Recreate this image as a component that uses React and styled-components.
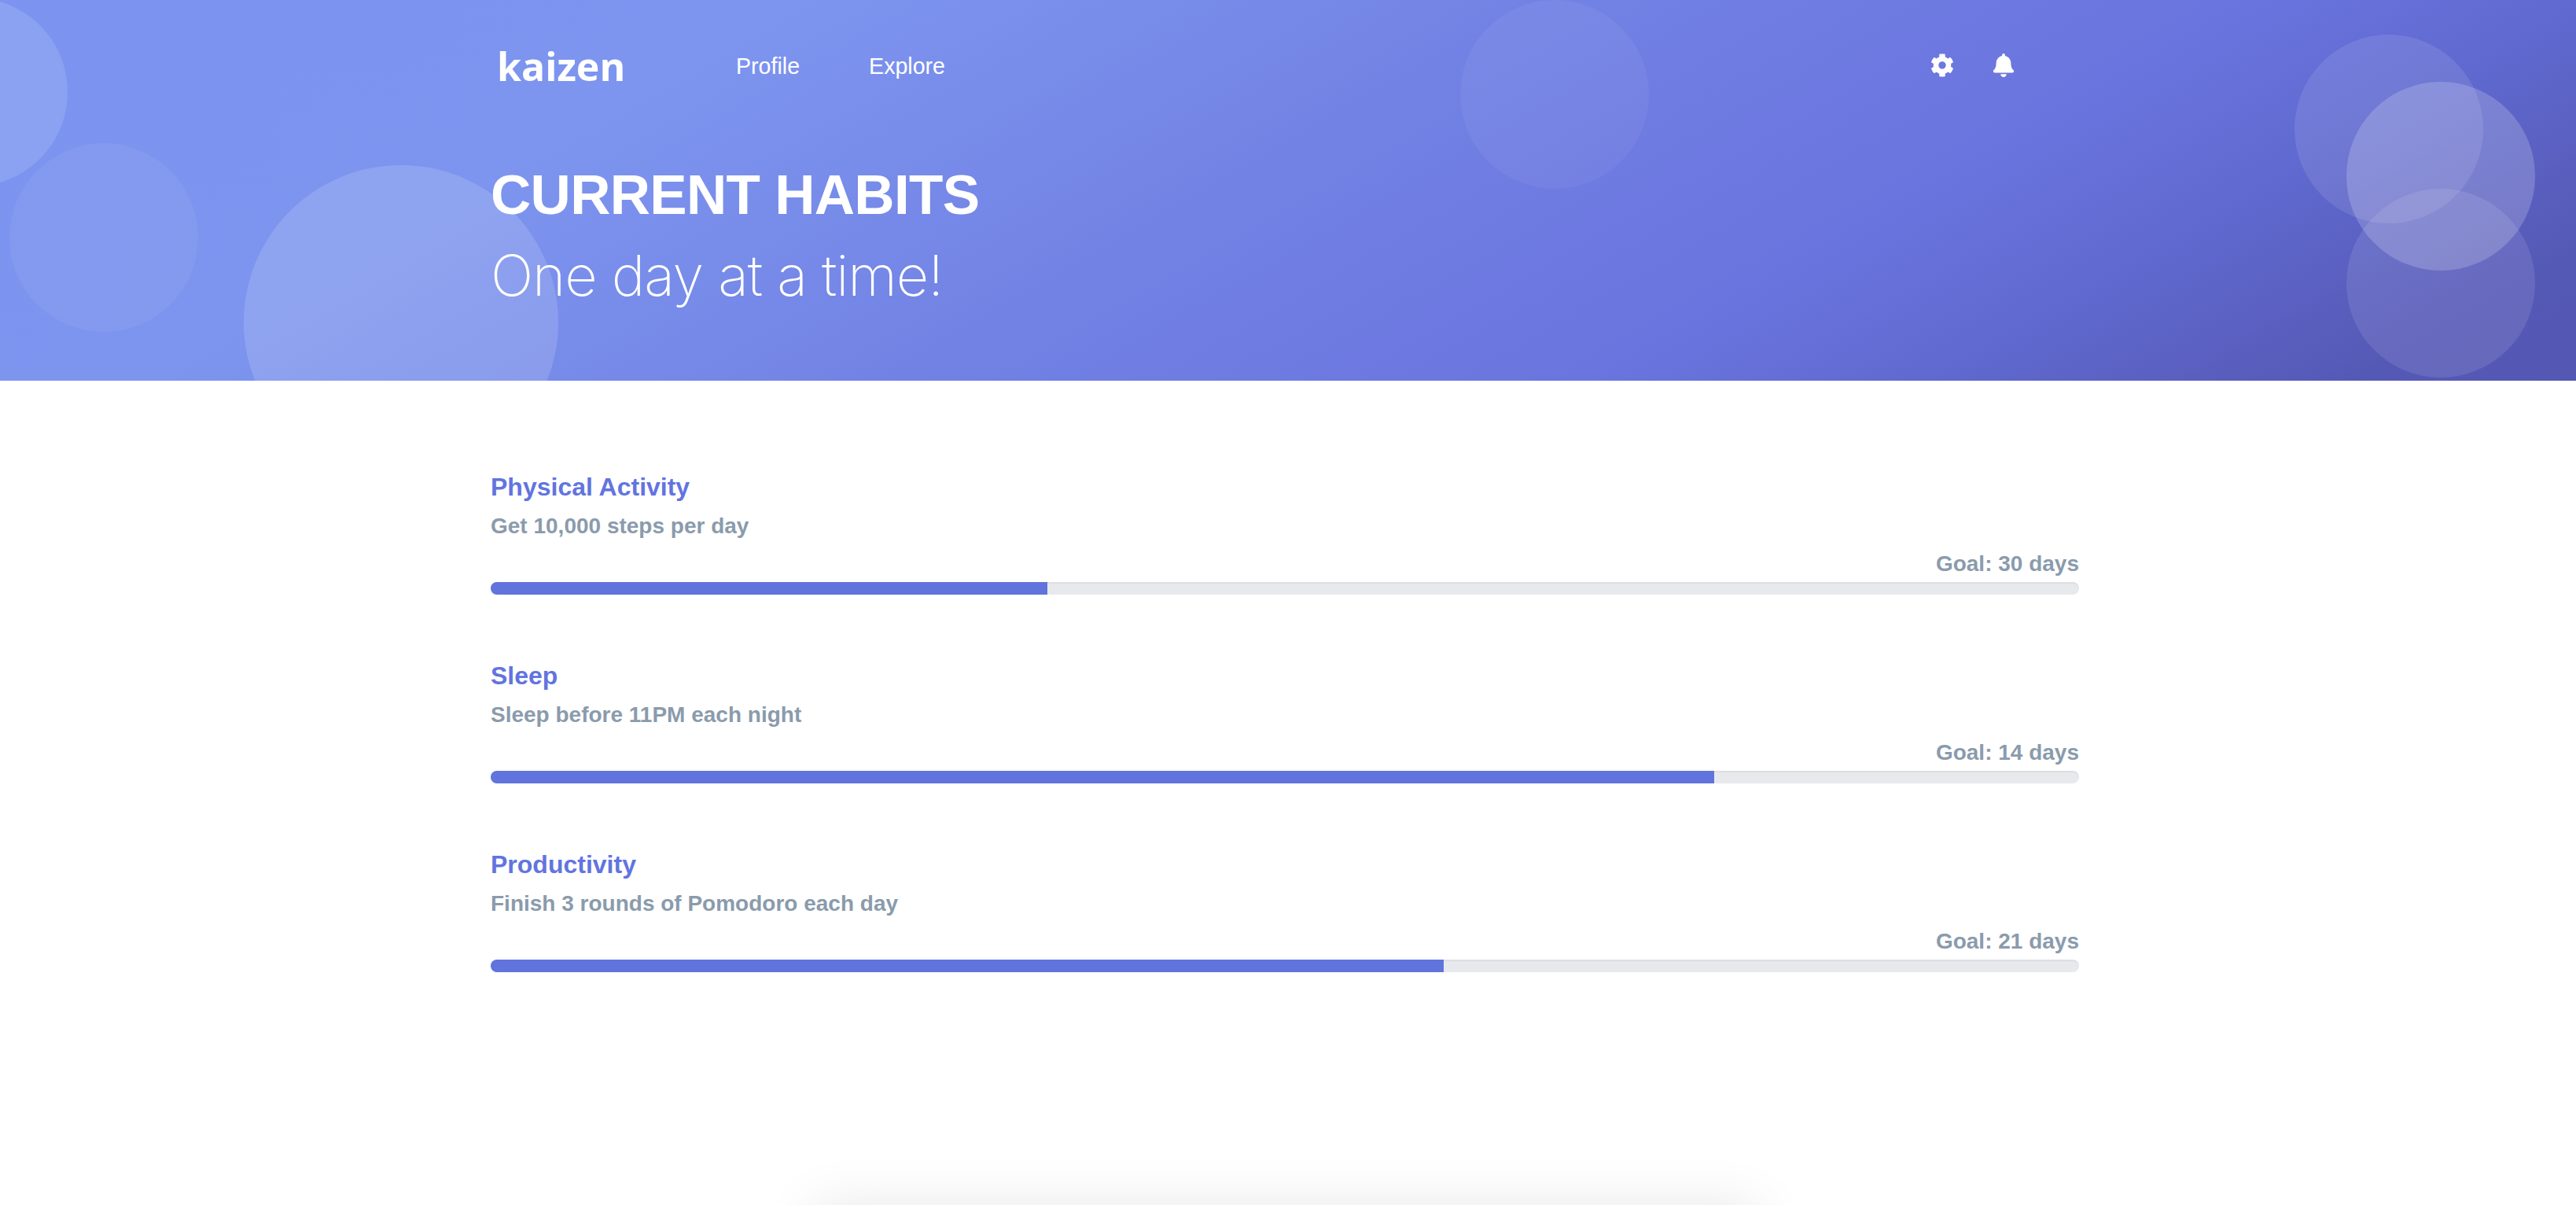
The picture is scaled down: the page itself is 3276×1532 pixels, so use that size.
import React from 'react';
import styled, { createGlobalStyle } from 'styled-components';
import { FaCog, FaBell } from 'react-icons/fa';

const GlobalStyle = createGlobalStyle`
    html, body {
        margin: 0;
        padding: 0;
        background: #fff;
    }
`;

const Page = styled.div`
    height: 1532px;
    overflow: hidden;
    font-family: "Liberation Sans", Arial, sans-serif;
`;

const Hero = styled.header`
    position: relative;
    height: 484px;
    overflow: hidden;
    background: linear-gradient(150deg, #7c94ef 0%, #7d95ef 25%, #7282e4 48%, #6a74de 70%, #5f69cf 80%, #5a5fbf 88%, #5559b6 93%, #5458b3 100%);
`;

const Circle = styled.span`
    position: absolute;
    left: ${p => p.$x}px;
    top: ${p => p.$y}px;
    width: ${p => p.$size}px;
    height: ${p => p.$size}px;
    border-radius: 50%;
    background: rgba(255, 255, 255, ${p => p.$alpha});
`;

const HeroInner = styled.div`
    position: relative;
    margin-left: 624px;
    width: 2020px;
`;

const TopBar = styled.div`
    display: flex;
    align-items: center;
    height: 168px;
    padding-left: 8px;
`;

const Logo = styled.div`
    width: 304px;
    font-family: "Open Sans", sans-serif;
    font-size: 50px;
    font-weight: 700;
    color: #fff;
`;

const Nav = styled.nav`
    display: flex;
    gap: 88px;
`;

const NavLink = styled.a`
    color: #fff;
    font-size: 28.6px;
    text-decoration: none;
`;

const Icons = styled.div`
    display: flex;
    align-items: center;
    gap: 48px;
    margin: -2px 0 0 1253px;
    color: #fff;
    font-size: 30px;
`;

const Title = styled.h1`
    margin: 40px 0 0;
    font-size: 71px;
    line-height: 80px;
    font-weight: 700;
    letter-spacing: -0.7px;
    color: #fff;
`;

const Subtitle = styled.p`
    margin: 22px 0 0;
    font-family: Inter, sans-serif;
    font-size: 72px;
    line-height: 80px;
    font-weight: 200;
    letter-spacing: -1.1px;
    color: #fff;
`;

const Habits = styled.main`
    display: flex;
    flex-direction: column;
    gap: 80px;
    margin-left: 624px;
    padding-top: 116px;
    width: 2020px;
`;

const Habit = styled.section`
    display: flex;
    flex-direction: column;
    height: 160px;
`;

const HabitName = styled.h2`
    margin: -1px 0 0;
    font-size: 32px;
    line-height: 40px;
    font-weight: 700;
    color: #6274e0;
`;

const HabitText = styled.p`
    margin: 10px 0 0;
    font-size: 28px;
    line-height: 40px;
    font-weight: 700;
    color: #8a9bac;
`;

const Goal = styled.div`
    margin-top: 8px;
    text-align: right;
    font-size: 28px;
    line-height: 40px;
    font-weight: 700;
    color: #8a9bac;
`;

const Track = styled.div`
    height: 16px;
    margin-top: 3px;
    border-radius: 8px;
    overflow: hidden;
    background: #e8e9ed;
    box-shadow: inset 0 2px 2px rgba(0, 0, 0, 0.05);
`;

const Fill = styled.div`
    height: 100%;
    width: ${p => p.$percent}%;
    background: #6173dc;
`;

// sits below the fold, only its shadow reaches into view
const BottomCard = styled.div`
    width: 1200px;
    height: 200px;
    margin: 295px 0 0 1035px;
    box-shadow: 0 0 70px rgba(0, 0, 0, 0.1);
`;

const circles = [
    { x: -154, y: -3, size: 240, alpha: 0.12 },
    { x: 12, y: 182, size: 240, alpha: 0.05 },
    { x: 310, y: 210, size: 400, alpha: 0.14 },
    { x: 1857, y: 0, size: 240, alpha: 0.05 },
    { x: 2918, y: 44, size: 240, alpha: 0.1 },
    { x: 2984, y: 104, size: 240, alpha: 0.19 },
    { x: 2984, y: 240, size: 240, alpha: 0.1 },
];

const habits = [
    { name: 'Physical Activity', text: 'Get 10,000 steps per day', goal: 30, percent: 35.05 },
    { name: 'Sleep', text: 'Sleep before 11PM each night', goal: 14, percent: 77.05 },
    { name: 'Productivity', text: 'Finish 3 rounds of Pomodoro each day', goal: 21, percent: 60 },
];

const App = () => {
    return (
        <Page>
            <GlobalStyle />
            <Hero>
                {circles.map((c, i) => (
                    <Circle key={i} $x={c.x} $y={c.y} $size={c.size} $alpha={c.alpha} />
                ))}
                <HeroInner>
                    <TopBar>
                        <Logo>kaizen</Logo>
                        <Nav>
                            <NavLink href="#">Profile</NavLink>
                            <NavLink href="#">Explore</NavLink>
                        </Nav>
                        <Icons>
                            <FaCog />
                            <FaBell />
                        </Icons>
                    </TopBar>
                    <Title>CURRENT HABITS</Title>
                    <Subtitle>One day at a time!</Subtitle>
                </HeroInner>
            </Hero>
            <Habits>
                {habits.map(h => (
                    <Habit key={h.name}>
                        <HabitName>{h.name}</HabitName>
                        <HabitText>{h.text}</HabitText>
                        <Goal>Goal: {h.goal} days</Goal>
                        <Track>
                            <Fill $percent={h.percent} />
                        </Track>
                    </Habit>
                ))}
            </Habits>
            <BottomCard />
        </Page>
    );
};

export default App;
